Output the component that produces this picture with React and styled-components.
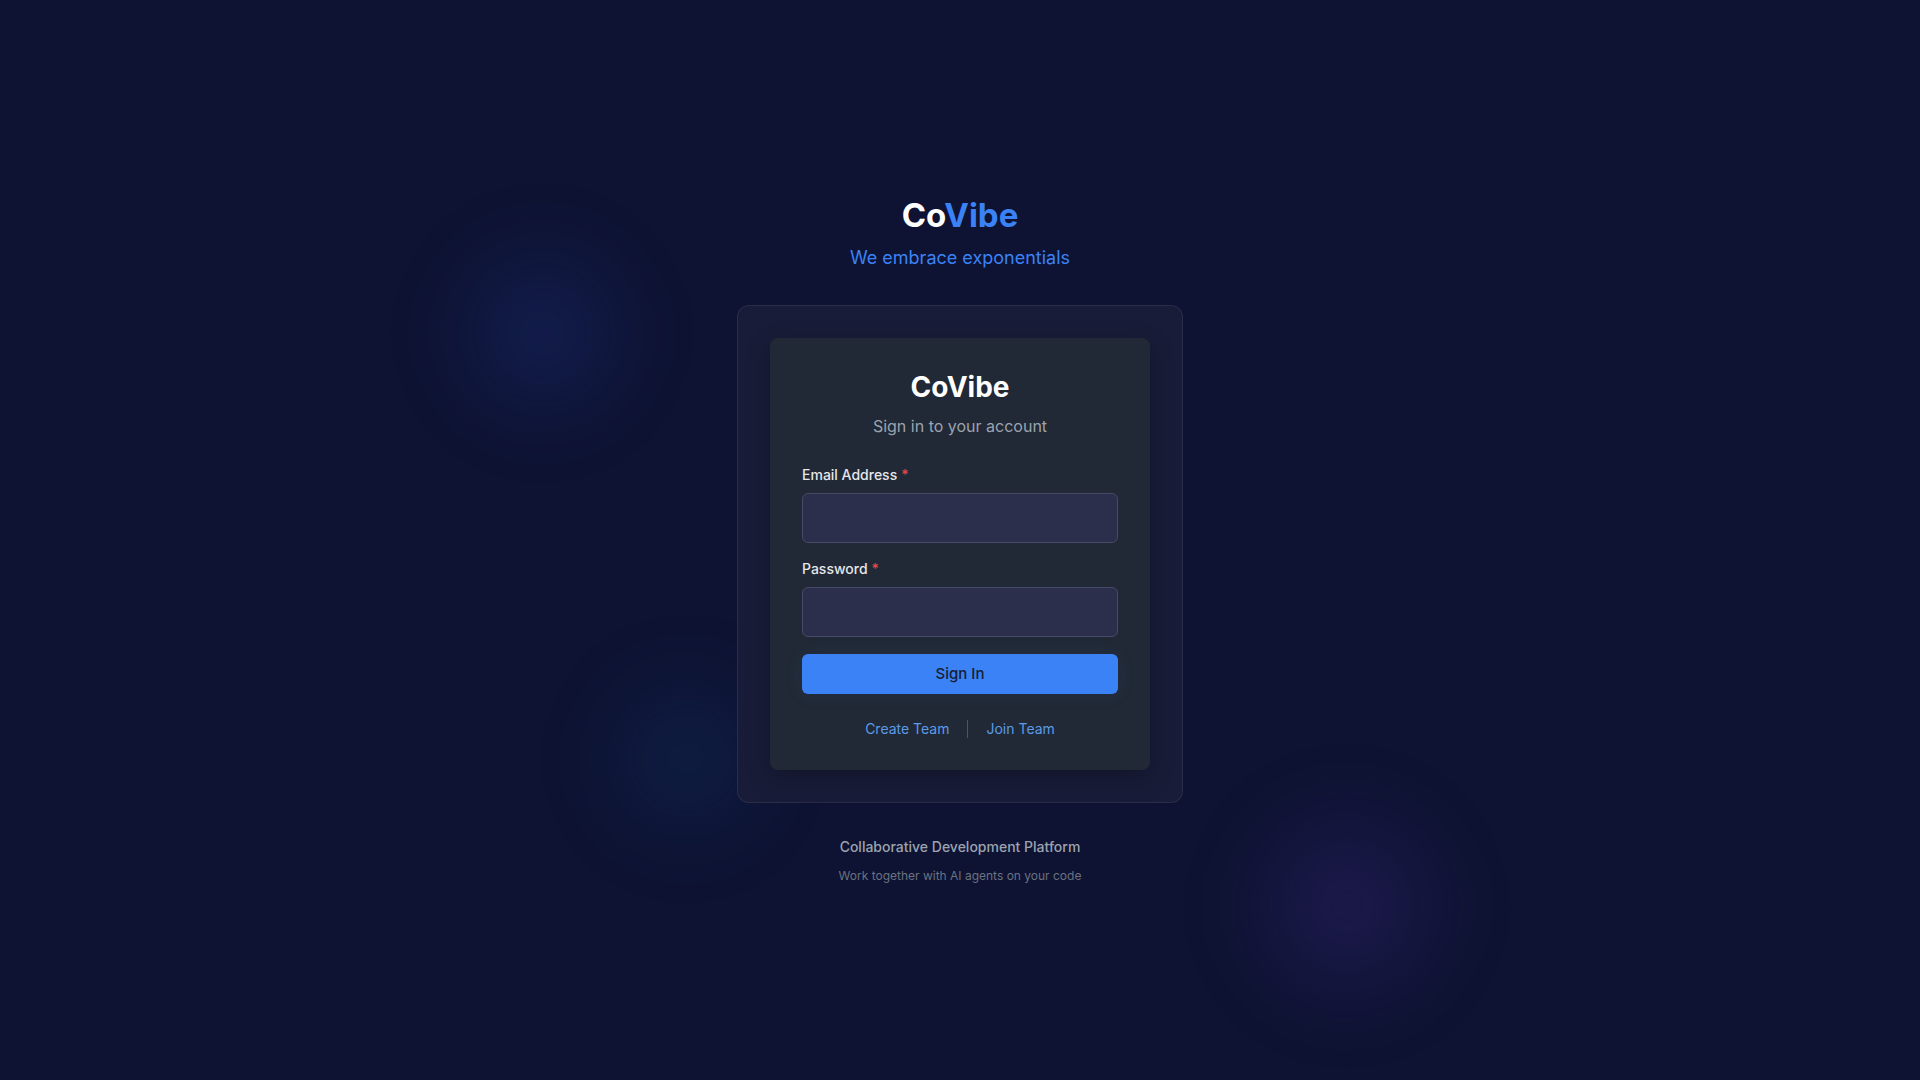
import styled, { createGlobalStyle } from "styled-components";

const GlobalStyle = createGlobalStyle`
  html, body {
    margin: 0;
    padding: 0;
    background: #0e1333;
    font-family: "Inter", "Noto Sans", sans-serif;
  }
  * { box-sizing: border-box; }
`;

const Page = styled.main`
  position: relative;
  min-height: 100vh;
  display: flex;
  flex-direction: column;
  align-items: center;
  justify-content: center;
  padding-bottom: 2px;
  overflow: hidden;
  background: #0e1333;
`;

const Orb = styled.div`
  position: absolute;
  left: ${({ x }) => x}px;
  top: ${({ y }) => y}px;
  width: ${({ size }) => size}px;
  height: ${({ size }) => size}px;
  border-radius: 50%;
  background: radial-gradient(circle, ${({ color }) => color} 0%, transparent 62%);
  filter: blur(28px);
  pointer-events: none;
`;

const Brand = styled.div`
  position: relative;
  display: flex;
  flex-direction: column;
  align-items: center;
  gap: 9px;
  margin-bottom: 33px;
`;

const BrandTitle = styled.h1`
  margin: 0;
  font-size: 33px;
  line-height: 40px;
  font-weight: 700;
  color: #ffffff;
`;

const Accent = styled.span`
  color: #3b82f6;
`;

const Tagline = styled.p`
  margin: 0;
  font-size: 18px;
  line-height: 28px;
  color: #3b82f6;
`;

const Shell = styled.section`
  position: relative;
  width: 446px;
  padding: 32px;
  background: #181c38;
  border: 1px solid rgba(255, 255, 255, 0.08);
  border-radius: 12px;
`;

const Card = styled.div`
  display: flex;
  flex-direction: column;
  padding: 32px 32px 31px;
  background: #212936;
  border-radius: 8px;
  box-shadow: 0 8px 24px rgba(0, 0, 0, 0.25);
`;

const CardTitle = styled.h2`
  margin: 0;
  text-align: center;
  font-size: 28px;
  line-height: 34px;
  font-weight: 700;
  color: #ffffff;
`;

const CardSubtitle = styled.p`
  margin: 10px 0 27px;
  text-align: center;
  font-size: 16px;
  line-height: 24px;
  color: #9ca3af;
`;

const Field = styled.div`
  display: flex;
  flex-direction: column;
  gap: 8px;
  margin-bottom: ${({ last }) => (last ? 17 : 16)}px;
`;

const Label = styled.label`
  font-size: 14px;
  line-height: 20px;
  font-weight: 500;
  color: #e5e7eb;
`;

const Required = styled.span`
  margin-left: 4px;
  color: #ef4444;
`;

const Input = styled.input`
  height: 50px;
  padding: 0 14px;
  background: #2b2f4b;
  border: 1px solid #454b66;
  border-radius: 6px;
  color: #ffffff;
  font: inherit;
  font-size: 15px;
  outline: none;
`;

const Button = styled.button`
  height: 40px;
  border: none;
  border-radius: 6px;
  background: #3b82f6;
  color: #152033;
  font-family: inherit;
  font-size: 15px;
  font-weight: 500;
  cursor: pointer;
  box-shadow: 0 0 20px rgba(59, 130, 246, 0.08);
`;

const Links = styled.div`
  display: flex;
  justify-content: center;
  align-items: center;
  gap: 18px;
  margin-top: 25px;
`;

const LinkText = styled.a`
  font-size: 14px;
  line-height: 20px;
  color: #5b9be8;
  text-decoration: none;
  cursor: pointer;
`;

const Divider = styled.span`
  width: 1px;
  height: 18px;
  background: #4b5563;
`;

const Footer = styled.footer`
  position: relative;
  display: flex;
  flex-direction: column;
  align-items: center;
  gap: 11px;
  margin-top: 34px;
`;

const FooterTitle = styled.p`
  margin: 0;
  font-size: 14px;
  line-height: 20px;
  font-weight: 500;
  color: #9ca3af;
`;

const FooterNote = styled.p`
  margin: 0;
  font-size: 12px;
  line-height: 16px;
  color: #6b7280;
`;

export default function App() {
  return (
    <>
      <GlobalStyle />
      <Page>
        <Orb x={412} y={203} size={260} color="rgba(28, 58, 150, 0.3)" />
        <Orb x={566} y={639} size={240} color="rgba(14, 50, 100, 0.38)" />
        <Orb x={1207} y={766} size={280} color="rgba(52, 36, 115, 0.45)" />

        <Brand>
          <BrandTitle>
            Co<Accent>Vibe</Accent>
          </BrandTitle>
          <Tagline>We embrace exponentials</Tagline>
        </Brand>

        <Shell>
          <Card>
            <CardTitle>CoVibe</CardTitle>
            <CardSubtitle>Sign in to your account</CardSubtitle>

            <Field>
              <Label>
                Email Address<Required>*</Required>
              </Label>
              <Input type="email" />
            </Field>

            <Field last>
              <Label>
                Password<Required>*</Required>
              </Label>
              <Input type="password" />
            </Field>

            <Button>Sign In</Button>

            <Links>
              <LinkText>Create Team</LinkText>
              <Divider />
              <LinkText>Join Team</LinkText>
            </Links>
          </Card>
        </Shell>

        <Footer>
          <FooterTitle>Collaborative Development Platform</FooterTitle>
          <FooterNote>Work together with AI agents on your code</FooterNote>
        </Footer>
      </Page>
    </>
  );
}
